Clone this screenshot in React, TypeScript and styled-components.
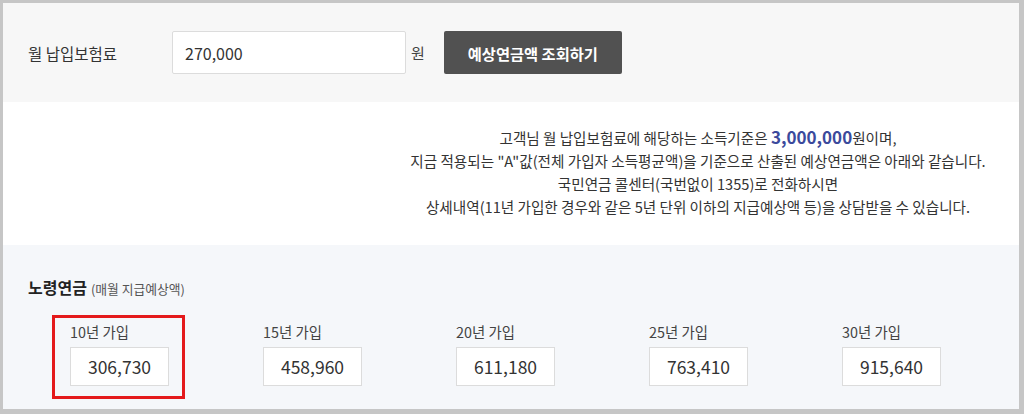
import styled, { createGlobalStyle } from "styled-components";

interface IPeriod {
  years: number;
  amount: string;
}

const periods: IPeriod[] = [
  { years: 10, amount: "306,730" },
  { years: 15, amount: "458,960" },
  { years: 20, amount: "611,180" },
  { years: 25, amount: "763,410" },
  { years: 30, amount: "915,640" },
];

const GlobalStyle = createGlobalStyle`
  * {
    box-sizing: border-box;
  }
  body {
    margin: 0;
    font-family: "Noto Sans CJK KR", "Noto Sans", sans-serif;
    color: #333;
  }
`;

const Frame = styled.div`
  width: 1024px;
  height: 414px;
  border-style: solid;
  border-color: #c6c6c6;
  border-width: 3px 5px 5px 3px;
  display: flex;
  flex-direction: column;
  overflow: hidden;
`;

const SearchBar = styled.div`
  display: flex;
  align-items: center;
  height: 99px;
  padding-left: 25px;
  background-color: #f7f7f7;
`;

const SearchLabel = styled.span`
  width: 144px;
  font-size: 15.5px;
  color: #333;
`;

const AmountInput = styled.div`
  width: 234px;
  height: 43px;
  display: flex;
  align-items: center;
  padding-left: 12px;
  background-color: #fff;
  border: 1px solid #dcdcdc;
  border-radius: 2px;
  font-size: 16px;
  color: #333;
`;

const Unit = styled.span`
  margin-left: 5px;
  font-size: 15px;
  color: #444;
`;

const SearchButton = styled.button`
  margin-left: 19px;
  width: 178px;
  height: 43px;
  border: none;
  border-radius: 2px;
  background-color: #515151;
  color: #fff;
  font-family: inherit;
  font-size: 15.3px;
  font-weight: 700;
`;

const Notice = styled.div`
  height: 143px;
  padding: 23px 16px 0 390px;
  background-color: #fff;
  text-align: center;
`;

const NoticeLine = styled.p`
  margin: 0;
  font-size: 14.6px;
  line-height: 23px;
  color: #333;
`;

const Highlight = styled.strong`
  font-size: 17px;
  font-weight: 700;
  color: #3b4a9c;
`;

const PensionSection = styled.div`
  flex: 1;
  padding: 30px 0 0 25px;
  background-color: #f5f7fa;
`;

const SectionTitle = styled.h3`
  margin: 0;
  font-size: 16px;
  line-height: 24px;
  font-weight: 700;
  color: #222;
`;

const SubTitle = styled.span`
  margin-left: 4px;
  font-size: 12.8px;
  font-weight: 400;
  color: #555;
`;

const PeriodRow = styled.div`
  display: flex;
  gap: 60px;
  margin: 14px 0 0 24px;
`;

const PeriodItem = styled.div<{ $highlighted?: boolean }>`
  width: 133px;
  padding: 6px 13px 10px 15px;
  border: 3px solid ${(props) => (props.$highlighted ? "#e4191b" : "transparent")};
`;

const PeriodLabel = styled.div`
  font-size: 14.4px;
  line-height: 16px;
  color: #444;
`;

const PeriodValue = styled.div`
  margin-top: 7px;
  width: 99px;
  height: 39px;
  display: flex;
  align-items: center;
  justify-content: center;
  background-color: #fff;
  border: 1px solid #dcdcdc;
  font-size: 17.5px;
  color: #333;
`;

const App = () => {
  return (
    <>
      <GlobalStyle />
      <Frame>
        <SearchBar>
          <SearchLabel>월 납입보험료</SearchLabel>
          <AmountInput>270,000</AmountInput>
          <Unit>원</Unit>
          <SearchButton>예상연금액 조회하기</SearchButton>
        </SearchBar>
        <Notice>
          <NoticeLine>
            고객님 월 납입보험료에 해당하는 소득기준은{" "}
            <Highlight>3,000,000</Highlight>원이며,
          </NoticeLine>
          <NoticeLine>
            지금 적용되는 "A"값(전체 가입자 소득평균액)을 기준으로 산출된
            예상연금액은 아래와 같습니다.
          </NoticeLine>
          <NoticeLine>국민연금 콜센터(국번없이 1355)로 전화하시면</NoticeLine>
          <NoticeLine>
            상세내역(11년 가입한 경우와 같은 5년 단위 이하의 지급예상액 등)을
            상담받을 수 있습니다.
          </NoticeLine>
        </Notice>
        <PensionSection>
          <SectionTitle>
            노령연금<SubTitle>(매월 지급예상액)</SubTitle>
          </SectionTitle>
          <PeriodRow>
            {periods.map((period, i) => (
              <PeriodItem key={period.years} $highlighted={i === 0}>
                <PeriodLabel>{period.years}년 가입</PeriodLabel>
                <PeriodValue>{period.amount}</PeriodValue>
              </PeriodItem>
            ))}
          </PeriodRow>
        </PensionSection>
      </Frame>
    </>
  );
};

export default App;
